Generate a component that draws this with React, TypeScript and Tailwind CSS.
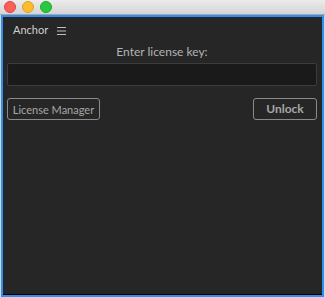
export default function App() {
  return (
    <div className="w-[325px] h-[297px] flex flex-col bg-[#d8d8d8] overflow-hidden" style={{ fontFamily: 'Lato, "Noto Sans", sans-serif' }}>
      {/* title bar */}
      <div className="h-[15px] flex items-center gap-[6px] pl-[4px] bg-gradient-to-b from-[#ececec] to-[#d4d4d4] border-b border-[#a8a8a8]">
        <span className="w-[12px] h-[12px] rounded-full bg-[#fc5f57] border border-[#e0443e]" />
        <span className="w-[12px] h-[12px] rounded-full bg-[#fdbc2e] border border-[#dea123]" />
        <span className="w-[12px] h-[12px] rounded-full bg-[#28c840] border border-[#1aab29]" />
      </div>

      {/* panel */}
      <div className="flex-1 flex flex-col mx-[1px] border-2 border-[#2f8ef0] bg-[#262626]">
        <div className="flex-1 flex flex-col pl-[4px] pr-[5px] border-b border-black">
          <div className="flex items-center gap-[9px] h-[26px] pl-[6px] pt-[1px]">
            <span className="text-[11px] text-[#cfcfcf]">Anchor</span>
            <svg width="9" height="8" viewBox="0 0 9 8" className="text-[#bdbdbd]">
              <path d="M0 0.5h9M0 4h9M0 7.5h9" stroke="currentColor" strokeWidth="1" />
            </svg>
          </div>
          <div className="text-center text-[12px] text-[#b3b3b3] leading-[16px] mt-[1px]">Enter license key:</div>
          <div className="h-[23px] mt-[3px] bg-[#1a1a1a] border border-[#3c3c3c] rounded-[2px]" />
          <div className="flex justify-between mt-[12px]">
            <button className="h-[22px] w-[93px] border border-[#8a8a8a] rounded-[3px] text-[11px] text-[#a6a6a6] leading-none">License Manager</button>
            <button className="h-[22px] w-[64px] border border-[#8a8a8a] rounded-[3px] text-[12px] font-bold text-[#a6a6a6] leading-none">Unlock</button>
          </div>
        </div>
      </div>
    </div>
  );
}
